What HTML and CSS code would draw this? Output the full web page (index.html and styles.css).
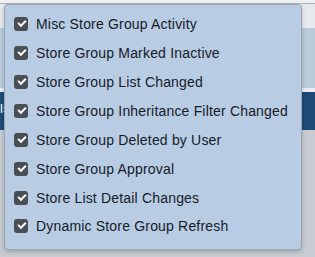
FILE: index.html
```html
<!DOCTYPE html>
<html lang="en">
<head>
  <meta charset="UTF-8">
  <title>Store Group Activity Filter</title>
  <link rel="stylesheet" href="styles.css">
</head>
<body>
  <div class="page">
    <div class="topbar"></div>
    <div class="toolbar"></div>
    <div class="band"></div>
    <div class="gap"></div>
    <div class="navbar"><span class="navtext">ls</span></div>
    <div class="content"></div>
  </div>

  <div class="menu">
    <label class="item"><input type="checkbox" checked><span class="box"></span>Misc Store Group Activity</label>
    <label class="item"><input type="checkbox" checked><span class="box"></span>Store Group Marked Inactive</label>
    <label class="item"><input type="checkbox" checked><span class="box"></span>Store Group List Changed</label>
    <label class="item"><input type="checkbox" checked><span class="box"></span>Store Group Inheritance Filter Changed</label>
    <label class="item"><input type="checkbox" checked><span class="box"></span>Store Group Deleted by User</label>
    <label class="item"><input type="checkbox" checked><span class="box"></span>Store Group Approval</label>
    <label class="item"><input type="checkbox" checked><span class="box"></span>Store List Detail Changes</label>
    <label class="item"><input type="checkbox" checked><span class="box"></span>Dynamic Store Group Refresh</label>
  </div>
</body>
</html>
```

FILE: styles.css
```css
html, body {
  margin: 0;
  padding: 0;
  width: 315px;
  height: 257px;
  overflow: hidden;
  font-family: "Liberation Sans", Arial, sans-serif;
}
.page {
  display: flex;
  flex-direction: column;
  height: 257px;
  background: #c3c8ce;
}
.topbar {
  height: 3px;
  background: #eef0f2;
  border-bottom: 1px solid #a9b0b8;
}
.toolbar {
  height: 24px;
  background: #e6e9ed;
}
.band {
  height: 60px;
  background: #b9cadb;
}
.gap {
  height: 4px;
  background: #e9edf1;
}
.navbar {
  height: 38px;
  background: #1e4a76;
  color: #fff;
  font-size: 13px;
  line-height: 34px;
  overflow: hidden;
}
.navtext {
  margin-left: 0;
}
.content {
  flex: 1;
  background: #c6ccd2;
}
.menu {
  position: absolute;
  left: 4px;
  top: 4px;
  width: 296px;
  height: 239px;
  background: #b8cce4;
  border: 1px solid #9aa5b1;
  border-radius: 4px;
  box-shadow: 0 2px 4px rgba(0,0,0,0.2);
  padding-top: 5px;
}
.item {
  display: flex;
  align-items: center;
  height: 28.86px;
  padding-left: 9px;
  font-size: 14px;
  letter-spacing: 0.18px;
  color: #161b28;
  cursor: pointer;
  white-space: nowrap;
}
.item input {
  display: none;
}
.box {
  width: 14px;
  height: 14px;
  margin-right: 8px;
  border-radius: 3px;
  background: #4a4f56;
  position: relative;
  flex: none;
}
.box::after {
  content: "";
  position: absolute;
  left: 4px;
  top: 3px;
  width: 6px;
  height: 3px;
  border-left: 2px solid #fff;
  border-bottom: 2px solid #fff;
  transform: rotate(-45deg);
}
```
